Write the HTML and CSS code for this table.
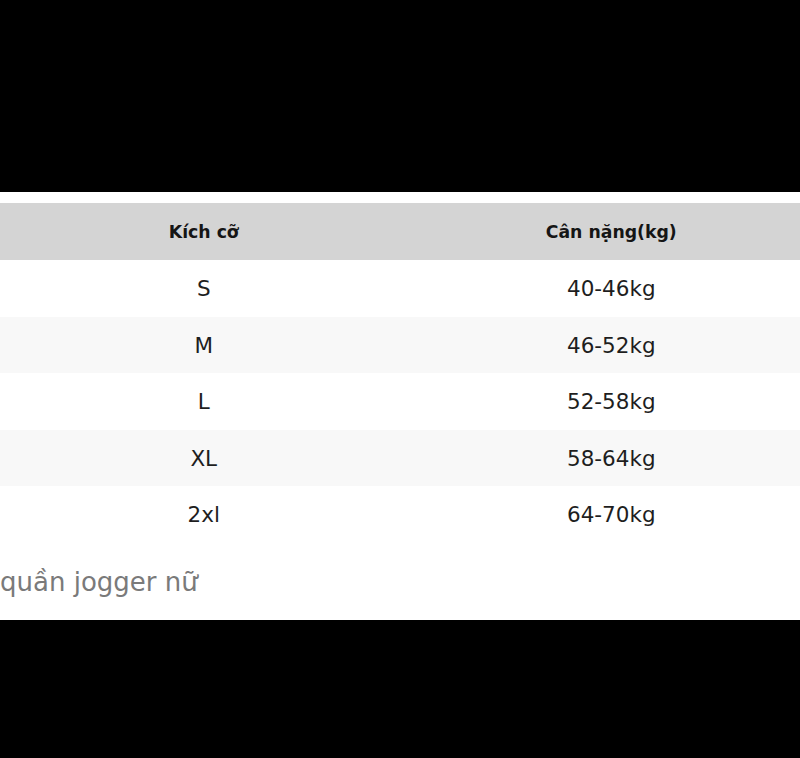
FILE: index.html
```html
<!DOCTYPE html>
<html lang="vi">
<head>
<meta charset="utf-8">
<link rel="stylesheet" href="styles.css">
</head>
<body>
<div class="top"></div>
<section class="sheet">
  <table class="sizes">
    <thead>
      <tr><th>Kích cỡ</th><th>Cân nặng(kg)</th></tr>
    </thead>
    <tbody>
      <tr class="r1"><td>S</td><td>40-46kg</td></tr>
      <tr class="r2"><td>M</td><td>46-52kg</td></tr>
      <tr class="r1"><td>L</td><td>52-58kg</td></tr>
      <tr class="r2"><td>XL</td><td>58-64kg</td></tr>
      <tr class="r1"><td>2xl</td><td>64-70kg</td></tr>
    </tbody>
  </table>
  <p class="caption">quần jogger nữ</p>
</section>
</body>
</html>
```
FILE: styles.css
```css
html, body {
  margin: 0;
  padding: 0;
  background: #000;
  overflow: hidden;
  height: 758px;
}
body {
  font-family: "DejaVu Sans", sans-serif;
  color: #1e1e1e;
}
.top {
  height: 192px;
}
.sheet {
  background: #fff;
  height: 428px;
  padding-top: 11px;
  box-sizing: border-box;
  width: 800px;
  overflow: hidden;
}
.sizes {
  width: 815px;
  border-collapse: collapse;
  table-layout: fixed;
}
.sizes th {
  background: #d4d4d4;
  height: 57px;
  padding: 0;
  font-size: 17.3px;
  font-weight: bold;
  color: #151515;
  text-align: center;
  vertical-align: middle;
}
.sizes td {
  padding: 0;
  text-align: center;
  vertical-align: middle;
  font-size: 21.5px;
  color: #1e1e1e;
}
.r1 td { background: #fff; height: 57px; }
.r2 td { background: #f8f8f8; height: 56px; }
.caption {
  margin: 0;
  padding-top: 24px;
  font-size: 26px;
  color: #7a7a7a;
  line-height: 30px;
}
```
